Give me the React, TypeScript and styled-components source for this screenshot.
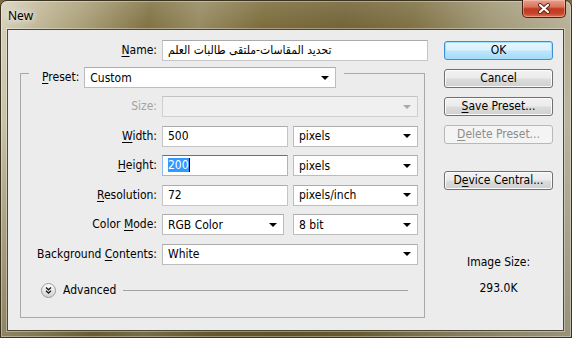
import React from 'react';
import styled, { createGlobalStyle } from 'styled-components';

const GlobalStyle = createGlobalStyle`
  html, body { margin: 0; padding: 0; }
  body {
    width: 572px;
    height: 338px;
    overflow: hidden;
    background: #7a6c40;
    font-family: "DejaVu Sans Condensed", "DejaVu Sans", sans-serif;
    font-size: 12px;
    color: #000;
  }
  #root { width: 572px; height: 338px; }
`;

// Aero glass frame, olive tint
const Window = styled.div`
  box-sizing: border-box;
  width: 572px;
  height: 338px;
  border: 1px solid #3a3320;
  border-radius: 7px 7px 0 0;
  padding: 0 7px 6px 6px;
  display: flex;
  flex-direction: column;
  box-shadow: inset 0 0 0 1px rgba(255, 255, 255, 0.35);
  background:
    linear-gradient(180deg, rgba(255, 255, 255, 0.12) 0, rgba(255, 255, 255, 0) 28px),
    linear-gradient(180deg, rgba(0, 0, 0, 0) 35%, rgba(50, 40, 10, 0.3) 100%),
    linear-gradient(100deg, #d8d3c1 0%, #c2b99a 6%, #a89d75 14%, #807243 24%, #968a62 32%, #7c6d3c 42%, #736437 55%, #7f7144 66%, #a09775 78%, #b6af95 90%, #c4bfaa 100%);
`;

const TitleBar = styled.div`
  height: 28px;
  display: flex;
  justify-content: space-between;
  align-items: flex-start;
  flex-shrink: 0;
`;

const Title = styled.span`
  margin: 7px 0 0 1px;
  font-family: "Noto Sans", "DejaVu Sans", sans-serif;
  font-size: 12px;
  line-height: 16px;
  color: #000;
  text-shadow: 0 0 6px rgba(255, 255, 255, 0.9), 0 0 10px rgba(255, 255, 255, 0.6);
`;

const CloseButton = styled.div`
  box-sizing: border-box;
  width: 44px;
  height: 18px;
  margin: -1px -2px 0 0;
  border: 1px solid #4a2012;
  border-top: none;
  border-radius: 0 0 5px 5px;
  display: flex;
  align-items: center;
  justify-content: center;
  box-shadow: inset 0 0 0 1px rgba(255, 210, 190, 0.45);
  background: linear-gradient(180deg, #e6a18e 0%, #d9745c 40%, #c2391f 52%, #c5422a 78%, #dd7354 100%);
`;

const Client = styled.div`
  flex: 1;
  display: flex;
  background: #ececec;
  border: 1px solid #4d4835;
  box-shadow: 0 0 0 1px rgba(255, 255, 255, 0.35);
`;

const LeftPane = styled.div`
  width: 422px;
  padding-top: 10px;
  display: flex;
  flex-direction: column;
`;

const NameRow = styled.div`
  display: grid;
  grid-template-columns: 149px 266px;
  column-gap: 5px;
  height: 21px;
`;

const Label = styled.span<{ $disabled?: boolean }>`
  text-align: right;
  line-height: 21px;
  white-space: nowrap;
  color: ${(p) => (p.$disabled ? '#a3a3a3' : '#000')};
`;

const Key = styled.span`
  text-decoration: underline;
  text-underline-offset: 2px;
`;

const Field = styled.div<{ $w?: number; $focused?: boolean }>`
  box-sizing: border-box;
  width: ${(p) => (p.$w ? `${p.$w}px` : '100%')};
  height: 21px;
  padding: 0 5px;
  line-height: 19px;
  white-space: nowrap;
  overflow: hidden;
  background: #fff;
  border: 1px solid ${(p) => (p.$focused ? '#8fbde8' : '#c6c6c6')};
  border-top-color: ${(p) => (p.$focused ? '#3d7bad' : '#ababab')};
`;

const Selected = styled.span`
  background: #3399ff;
  color: #fff;
  border-right: 1px solid #000;
`;

const Combo = styled.div<{ $w?: number; $disabled?: boolean }>`
  box-sizing: border-box;
  width: ${(p) => (p.$w ? `${p.$w}px` : '100%')};
  height: 21px;
  padding: 0 5px 0 5px;
  display: flex;
  align-items: center;
  justify-content: space-between;
  white-space: nowrap;
  background: ${(p) => (p.$disabled ? '#f0f0f0' : '#fff')};
  border: 1px solid ${(p) => (p.$disabled ? '#cfcfcf' : '#bdbdbd')};
  border-top-color: ${(p) => (p.$disabled ? '#c2c2c2' : '#acacac')};
`;

const Arrow = styled.span<{ $disabled?: boolean }>`
  width: 0;
  height: 0;
  margin-right: 1px;
  border-left: 4px solid transparent;
  border-right: 4px solid transparent;
  border-top: 4px solid ${(p) => (p.$disabled ? '#a8a8a8' : '#000')};
`;

const Group = styled.fieldset`
  box-sizing: border-box;
  width: 405px;
  margin: 6px 0 0 12px;
  padding: 0 16px 19px 0;
  min-inline-size: 0;
  border: 1px solid #a9a9a9;
`;

const Legend = styled.legend`
  height: 12px;
  margin-left: 8px;
  padding: 0 8px 0 13px;
  display: flex;
  align-items: flex-start;
  gap: 5px;
`;

const FormGrid = styled.div`
  display: grid;
  grid-template-columns: 136px 256px;
  grid-auto-rows: 21px;
  column-gap: 5px;
  row-gap: 8.5px;
  padding-top: 17px;
`;

const Pair = styled.div`
  display: flex;
  justify-content: space-between;
`;

const AdvancedRow = styled.div`
  height: 15px;
  margin-top: 18.5px;
  padding-left: 20px;
  display: flex;
  align-items: center;
  gap: 7px;
`;

const AdvancedText = styled.span`
  line-height: 15px;
`;

const Rule = styled.div`
  flex: 1;
  height: 1px;
  background: #a2a2a2;
`;

const RightPane = styled.div`
  width: 109px;
  margin-left: 14px;
  padding-top: 11px;
  display: flex;
  flex-direction: column;
`;

type ButtonKind = 'default' | 'normal' | 'disabled';

const Button = styled.div<{ $kind?: ButtonKind; $gap?: number }>`
  box-sizing: border-box;
  height: 19px;
  margin-top: ${(p) => p.$gap ?? 0}px;
  border-radius: 3px;
  text-align: center;
  line-height: 17px;
  white-space: nowrap;
  border: 1px solid
    ${(p) => (p.$kind === 'default' ? '#3c8fd0' : p.$kind === 'disabled' ? '#b5b9bc' : '#707070')};
  color: ${(p) => (p.$kind === 'disabled' ? '#8d8d8d' : '#000')};
  box-shadow: ${(p) =>
    p.$kind === 'default' ? 'inset 0 0 0 1px #9fe0ff' : p.$kind === 'disabled' ? 'none' : 'inset 0 0 0 1px #fbfbfb'};
  background: ${(p) =>
    p.$kind === 'default'
      ? 'linear-gradient(180deg, #eaf6fd 0%, #d9f0fc 48%, #bee6fd 52%, #a7d9f5 100%)'
      : p.$kind === 'disabled'
        ? '#f4f4f4'
        : 'linear-gradient(180deg, #f2f2f2 0%, #ebebeb 48%, #dddddd 52%, #cfcfcf 100%)'};
`;

const ImageSize = styled.div`
  margin-top: 65px;
  text-align: center;
  line-height: 15px;
`;

const SizeValue = styled.div`
  margin-top: 11px;
  text-align: center;
  line-height: 15px;
`;

const CloseGlyph = () => (
  <svg width="14" height="11" viewBox="0 0 14 11">
    <path d="M3 2 L11 9 M11 2 L3 9" stroke="#5a2416" strokeWidth="4" strokeLinecap="round" />
    <path d="M3 2 L11 9 M11 2 L3 9" stroke="#ffffff" strokeWidth="2.2" strokeLinecap="round" />
  </svg>
);

const AdvancedIcon = () => (
  <svg width="15" height="15" viewBox="0 0 15 15">
    <defs>
      <linearGradient id="adv" x1="0" y1="0" x2="0" y2="1">
        <stop offset="0" stopColor="#ffffff" />
        <stop offset="1" stopColor="#d2d2d2" />
      </linearGradient>
    </defs>
    <circle cx="7.5" cy="7.5" r="7" fill="url(#adv)" stroke="#9a9a9a" />
    <path d="M5 4.5 L7.5 6.8 L10 4.5 M5 7.8 L7.5 10.1 L10 7.8" fill="none" stroke="#1a1a1a" strokeWidth="1.3" />
  </svg>
);

export default function App() {
  return (
    <>
      <GlobalStyle />
      <Window>
        <TitleBar>
          <Title>New</Title>
          <CloseButton>
            <CloseGlyph />
          </CloseButton>
        </TitleBar>
        <Client>
          <LeftPane>
            <NameRow>
              <Label>
                <Key>N</Key>ame:
              </Label>
              <Field>تحديد المقاسات-ملتقى طالبات العلم</Field>
            </NameRow>
            <Group>
              <Legend>
                <Label>
                  <Key>P</Key>reset:
                </Label>
                <Combo $w={252}>
                  Custom
                  <Arrow />
                </Combo>
              </Legend>
              <FormGrid>
                <Label $disabled>Size:</Label>
                <Combo $disabled>
                  <span />
                  <Arrow $disabled />
                </Combo>

                <Label>
                  <Key>W</Key>idth:
                </Label>
                <Pair>
                  <Field $w={126}>500</Field>
                  <Combo $w={125}>
                    pixels
                    <Arrow />
                  </Combo>
                </Pair>

                <Label>
                  <Key>H</Key>eight:
                </Label>
                <Pair>
                  <Field $w={126} $focused>
                    <Selected>200</Selected>
                  </Field>
                  <Combo $w={125}>
                    pixels
                    <Arrow />
                  </Combo>
                </Pair>

                <Label>
                  <Key>R</Key>esolution:
                </Label>
                <Pair>
                  <Field $w={126}>72</Field>
                  <Combo $w={125}>
                    pixels/inch
                    <Arrow />
                  </Combo>
                </Pair>

                <Label>
                  Color <Key>M</Key>ode:
                </Label>
                <Pair>
                  <Combo $w={122}>
                    RGB Color
                    <Arrow />
                  </Combo>
                  <Combo $w={125}>
                    8 bit
                    <Arrow />
                  </Combo>
                </Pair>

                <Label>
                  Background <Key>C</Key>ontents:
                </Label>
                <Combo>
                  White
                  <Arrow />
                </Combo>
              </FormGrid>
              <AdvancedRow>
                <AdvancedIcon />
                <AdvancedText>Advanced</AdvancedText>
                <Rule />
              </AdvancedRow>
            </Group>
          </LeftPane>
          <RightPane>
            <Button $kind="default">OK</Button>
            <Button $gap={9}>Cancel</Button>
            <Button $gap={9}>
              <Key>S</Key>ave Preset...
            </Button>
            <Button $kind="disabled" $gap={9}>
              <Key>D</Key>elete Preset...
            </Button>
            <Button $gap={27}>
              D<Key>e</Key>vice Central...
            </Button>
            <ImageSize>Image Size:</ImageSize>
            <SizeValue>293.0K</SizeValue>
          </RightPane>
        </Client>
      </Window>
    </>
  );
}
